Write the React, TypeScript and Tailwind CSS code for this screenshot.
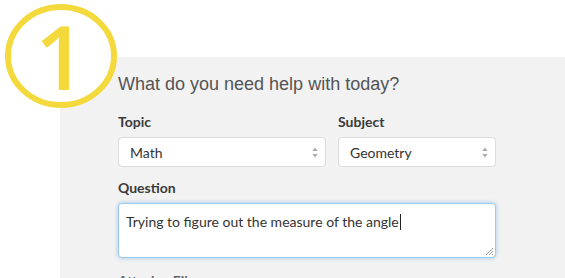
import React from 'react'

const labelCls = "block text-[14px] leading-[20px] font-bold text-[#3a3a3a] [font-family:Lato,'Open_Sans',sans-serif]"

const SelectBox: React.FC<{ value: string; className?: string }> = ({ value, className }) => (
  <div
    className={`flex h-[30px] items-center justify-between rounded-[4px] border border-[#dcdcdc] bg-white pl-[11px] pr-[7px] ${className ?? ''}`}
  >
    <span className="text-[14px] text-[#333] [font-family:Lato,sans-serif]">{value}</span>
    <svg width="6" height="11" viewBox="0 0 6 11" className="text-[#a9a9a9]">
      <path d="M3 0.5L5.6 4H0.4Z" fill="currentColor" />
      <path d="M3 10.5L5.6 7H0.4Z" fill="currentColor" />
    </svg>
  </div>
)

export default function App() {
  return (
    <div className="relative h-[278px] w-[565px] overflow-hidden bg-white">
      {/* step badge */}
      <div className="absolute left-0 top-0 z-10 h-[112px] w-[122px]">
        <svg width="122" height="112" viewBox="0 0 122 112" className="absolute inset-0">
          <ellipse cx="61" cy="56" rx="53" ry="49" fill="white" stroke="#f4d93d" strokeWidth="6" />
        </svg>
        <span className="absolute left-[35px] top-[3px] w-[48px] text-center text-[89px] leading-[106px] font-semibold text-[#f4d93d] [font-family:'Open_Sans',sans-serif]">
          1
        </span>
      </div>

      <div className="ml-[60px] mt-[57px] h-[221px] bg-[#f2f2f2] pl-[58px] pt-[16px]">
        <h2 className="text-[18px] leading-[22px] text-[#555] [font-family:'Liberation_Sans',Arial,sans-serif]">
          What do you need help with today?
        </h2>

        <div className="mt-[17px] grid w-[378px] grid-cols-[208px_158px] gap-x-[12px]">
          <div>
            <label className={labelCls}>Topic</label>
            <SelectBox value="Math" className="mt-[5px]" />
          </div>
          <div>
            <label className={labelCls}>Subject</label>
            <SelectBox value="Geometry" className="mt-[5px]" />
          </div>
        </div>

        <label className={`${labelCls} mt-[11px]`}>Question</label>
        <div className="relative mt-[5px] h-[55px] w-[378px] rounded-[4px] border border-[#9ccaf0] bg-white px-[7px] pt-[5px] shadow-[0_0_4px_rgba(90,160,230,0.55)]">
          <span className="text-[14px] leading-[20px] text-[#333] [font-family:Lato,sans-serif]">
            Trying to figure out the measure of the angle
          </span>
          <span className="ml-[1px] inline-block h-[16px] w-px translate-y-[3px] bg-[#222]" />
          <svg width="10" height="10" viewBox="0 0 10 10" className="absolute bottom-[1px] right-[1px]">
            <path d="M9 2L2 9M9 5L5 9M9 8L8 9" stroke="#999" strokeWidth="1" />
          </svg>
        </div>

        <label className={`${labelCls} mt-[13px] text-[#666]`}>Attach a File</label>
      </div>
    </div>
  )
}
